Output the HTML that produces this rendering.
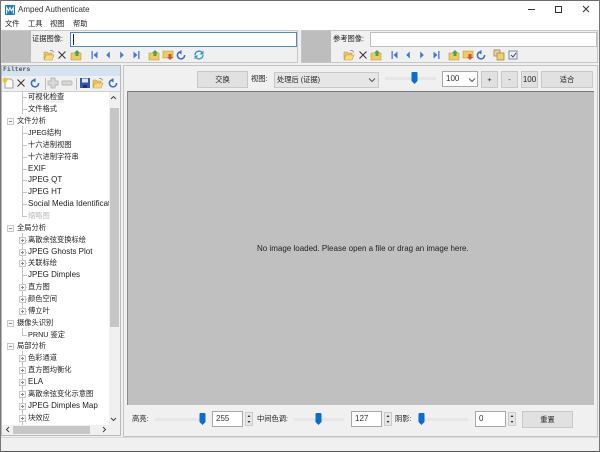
<!DOCTYPE html>
<html><head><meta charset="utf-8">
<style>
html,body{margin:0;padding:0;background:#f0f0f0}
body{width:600px;height:452px;overflow:hidden;position:relative}
#w{position:absolute;left:0;top:0;width:600px;height:452px;overflow:hidden;background:#f0f0f0;font-family:"Liberation Sans","Noto Sans CJK SC",sans-serif;color:#222;font-size:7.25px;filter:blur(.3px)}
.a{position:absolute}
.t{position:absolute;white-space:nowrap;line-height:12px;height:12px}
.btn{position:absolute;background:#e1e1e1;border:1px solid #c8c8c8;box-sizing:border-box;text-align:center;color:#222}
.inp{position:absolute;background:#fff;border:1px solid #a8a8a8;box-sizing:border-box;color:#333;padding-left:3px}
.track{position:absolute;height:3px;background:#e6e6e6}
.thumb{position:absolute;width:7px;height:12px}
.ico{position:absolute;width:12px;height:12px}
.l{font-size:8px}
.v{position:absolute;width:1px;background:#c4c4c4}
.h{position:absolute;height:1px;background:#c4c4c4}
.pm{position:absolute;width:7px;height:7px;border:1px solid #c8c8c8;box-sizing:border-box;background:#f8f8f8}
.pm:before{content:"";position:absolute;left:1px;top:2px;width:3px;height:1px;background:#888}
.pm.p:after{content:"";position:absolute;left:2px;top:1px;width:1px;height:3px;background:#888}
</style></head><body>
<svg width="0" height="0" style="position:absolute">
<defs>
<symbol id="fo" viewBox="0 0 12 12"><path d="M1 3h3l1 1h4v2H3L1 10z" fill="#e8c860" stroke="#b89a48" stroke-width=".6"/><path d="M3 6h8l-2 5H1z" fill="#f6da80" stroke="#c0a04c" stroke-width=".6"/><path d="M7 1.5q3-.5 3.5 2" stroke="#667" fill="none" stroke-width=".6"/></symbol>
<symbol id="x" viewBox="0 0 12 12"><path d="M2.5 2.5l7 7M9.5 2.5l-7 7" stroke="#333" stroke-width="1" fill="none"/></symbol>
<symbol id="up" viewBox="0 0 12 12"><path d="M1 4h10v7H1z" fill="#eccb64" stroke="#b8983f" stroke-width=".6"/><path d="M7 1l3 3H8.5v3h-3V4H4z" fill="#4aa544"/></symbol>
<symbol id="ex" viewBox="0 0 12 12"><path d="M1 2h10v7H1z" fill="#eccb64" stroke="#b8983f" stroke-width=".6"/><path d="M8 11l-3-3h1.5V5h3v3H11z" fill="#d4502f"/></symbol>
<symbol id="f" viewBox="0 0 12 12"><path d="M3.5 2h1.3v8H3.5z M9.5 2.5v7L5.5 6z" fill="#4078cf"/></symbol>
<symbol id="p" viewBox="0 0 12 12"><path d="M7.8 2.5v7L4.2 6z" fill="#4078cf"/></symbol>
<symbol id="n" viewBox="0 0 12 12"><path d="M4.2 2.5v7L7.8 6z" fill="#4078cf"/></symbol>
<symbol id="la" viewBox="0 0 12 12"><path d="M8.5 2h-1.3v8h1.3z M2.5 2.5v7L6.5 6z" fill="#4078cf"/></symbol>
<symbol id="r" viewBox="0 0 12 12"><path d="M4 3.2A3.6 3.6 0 1 0 9.6 6" stroke="#3a70c0" stroke-width="1.5" fill="none"/><path d="M6.5 1v4.5L3 3.2z" fill="#3a70c0"/></symbol>
<symbol id="s" viewBox="0 0 12 12"><path d="M2 6a4 4 0 0 1 7-2.5" stroke="#3a8fd0" stroke-width="1.4" fill="none"/><path d="M10.5 1.5v4h-4z" fill="#3a8fd0"/><path d="M10 6a4 4 0 0 1-7 2.5" stroke="#38a0c8" stroke-width="1.4" fill="none"/><path d="M1.5 10.5v-4h4z" fill="#38a0c8"/></symbol>
<symbol id="c" viewBox="0 0 12 12"><path d="M1 1h6v6H1z" fill="#e9d79a" stroke="#8c7c48" stroke-width=".7"/><path d="M4 4h7v7H4z" fill="#efcf70" stroke="#9c8440" stroke-width=".7"/></symbol>
<symbol id="k" viewBox="0 0 12 12"><path d="M2 2h8v8H2z" fill="#eef2f8" stroke="#7c8aa0"/><path d="M4 6l2 2 3-4" stroke="#445" fill="none"/></symbol>
<symbol id="ne" viewBox="0 0 12 12"><path d="M3 2h6l2 2v7H3z" fill="#fff" stroke="#8a8a8a" stroke-width=".8"/><circle cx="3" cy="3" r="2.4" fill="#f2c521"/></symbol>
<symbol id="pl" viewBox="0 0 12 12"><path d="M4 1h4v3h3v4H8v3H4V8H1V4h3z" fill="#d8d8d8" stroke="#b8b8b8"/></symbol>
<symbol id="mi" viewBox="0 0 12 12"><rect x="1" y="4" width="10" height="4" rx="1" fill="#d8d8d8" stroke="#b8b8b8"/></symbol>
<symbol id="sv" viewBox="0 0 12 12"><path d="M1 1h10v10H1z" fill="#2f55b0"/><path d="M3 1.5h6v4H3z" fill="#dfe6f5"/><path d="M4 8h4v3H4z" fill="#1c2f70"/></symbol>
<symbol id="th" viewBox="0 0 7 12"><path d="M.5 1q0-1 1-1h4q1 0 1 1v8l-3 3-3-3z" fill="#0a6cd0"/></symbol>
<symbol id="lg" viewBox="0 0 12 12"><rect width="12" height="12" rx="1" fill="#1c7cc4"/><path d="M2 10.5V3l2.3 4L6 3l1.7 4L10 3v7.5" stroke="#fff" stroke-width="1.2" fill="none"/></symbol>
</defs></svg>
<div id="w">

<!-- window frame -->
<div class="a" style="left:0;top:0;width:600px;height:1px;background:#6f6a68"></div>
<div class="a" style="left:0;top:1px;width:600px;height:29px;background:#fff"></div>
<div class="a" style="left:0;top:451px;width:600px;height:1px;background:#555"></div>
<div class="a" style="left:0;top:0;width:1px;height:452px;background:#777"></div>
<div class="a" style="left:599px;top:0;width:1px;height:452px;background:#777"></div>

<!-- title -->
<svg class="ico" style="left:5px;top:5px;width:10px;height:10px"><use href="#lg"/></svg>
<div class="t l" style="left:18px;top:4px;color:#333">Amped Authenticate</div>
<div class="a" style="left:528px;top:9px;width:7px;height:1px;background:#333"></div>
<div class="a" style="left:555px;top:6px;width:7px;height:7px;border:1px solid #333;box-sizing:border-box"></div>
<svg class="a" style="left:582px;top:5px;width:8px;height:8px"><path d="M1 1l6 6M7 1L1 7" stroke="#333" fill="none"/></svg>

<!-- menu -->
<div class="t" style="left:5px;top:18px">文件</div>
<div class="t" style="left:28px;top:18px">工具</div>
<div class="t" style="left:50px;top:18px">视图</div>
<div class="t" style="left:73px;top:18px">帮助</div>

<!-- toolbars -->
<div class="a" style="left:1px;top:30px;width:297px;height:33px;background:#f0f0f0;border:1px solid #c6c6c6;box-sizing:border-box"></div>
<div class="a" style="left:2px;top:31px;width:29px;height:31px;background:#bdbdbd"></div>
<div class="t" style="left:32px;top:33px">证据图像:</div>
<div class="a" style="left:70px;top:32px;width:227px;height:15px;background:#fff;border:1px solid #4d8cc8;box-sizing:border-box"></div>
<div class="a" style="left:73px;top:34px;width:1px;height:11px;background:#222"></div>
<svg class="ico" style="left:43px;top:49px"><use href="#fo"/></svg>
<svg class="ico" style="left:56px;top:49px"><use href="#x"/></svg>
<svg class="ico" style="left:70px;top:49px"><use href="#up"/></svg>
<svg class="ico" style="left:88px;top:49px"><use href="#f"/></svg>
<svg class="ico" style="left:102px;top:49px"><use href="#p"/></svg>
<svg class="ico" style="left:116px;top:49px"><use href="#n"/></svg>
<svg class="ico" style="left:131px;top:49px"><use href="#la"/></svg>
<svg class="ico" style="left:148px;top:49px"><use href="#up"/></svg>
<svg class="ico" style="left:162px;top:49px"><use href="#ex"/></svg>
<svg class="ico" style="left:175px;top:49px"><use href="#r"/></svg>
<svg class="ico" style="left:193px;top:49px"><use href="#s"/></svg>

<div class="a" style="left:301px;top:30px;width:297px;height:33px;background:#f0f0f0;border:1px solid #c6c6c6;box-sizing:border-box"></div>
<div class="a" style="left:302px;top:31px;width:29px;height:31px;background:#bdbdbd"></div>
<div class="t" style="left:333px;top:33px">参考图像:</div>
<div class="a" style="left:370px;top:32px;width:227px;height:15px;background:#fff;border:1px solid #c0c0c0;box-sizing:border-box"></div>
<svg class="ico" style="left:343px;top:49px"><use href="#fo"/></svg>
<svg class="ico" style="left:357px;top:49px"><use href="#x"/></svg>
<svg class="ico" style="left:370px;top:49px"><use href="#up"/></svg>
<svg class="ico" style="left:388px;top:49px"><use href="#f"/></svg>
<svg class="ico" style="left:402px;top:49px"><use href="#p"/></svg>
<svg class="ico" style="left:416px;top:49px"><use href="#n"/></svg>
<svg class="ico" style="left:431px;top:49px"><use href="#la"/></svg>
<svg class="ico" style="left:448px;top:49px"><use href="#up"/></svg>
<svg class="ico" style="left:462px;top:49px"><use href="#ex"/></svg>
<svg class="ico" style="left:475px;top:49px"><use href="#r"/></svg>
<svg class="ico" style="left:493px;top:49px"><use href="#c"/></svg>
<svg class="ico" style="left:507px;top:49px"><use href="#k"/></svg>

<!-- filters panel -->
<div class="a" style="left:1px;top:65px;width:120px;height:371px;border:1px solid #b9b9b9;box-sizing:border-box;background:#fff"></div>
<div class="a" style="left:2px;top:66px;width:118px;height:10px;background:#d5e3f1"></div>
<div class="t" style="left:3px;top:64px;font-family:'Liberation Mono',monospace;font-size:6.5px;font-weight:bold;color:#555">Filters</div>
<div class="a" style="left:2px;top:76px;width:118px;height:16px;background:#f0f0f0;border-bottom:1px solid #d0d0d0;box-sizing:border-box"></div>
<svg class="ico" style="left:2px;top:77px"><use href="#ne"/></svg>
<svg class="ico" style="left:15px;top:77px"><use href="#x"/></svg>
<svg class="ico" style="left:29px;top:77px"><use href="#r"/></svg>
<div class="a" style="left:45px;top:78px;width:1px;height:12px;background:#bbb"></div>
<svg class="ico" style="left:47px;top:77px"><use href="#pl"/></svg>
<svg class="ico" style="left:61px;top:77px"><use href="#mi"/></svg>
<div class="a" style="left:76px;top:78px;width:1px;height:12px;background:#bbb"></div>
<svg class="ico" style="left:79px;top:77px"><use href="#sv"/></svg>
<svg class="ico" style="left:92px;top:77px"><use href="#fo"/></svg>
<svg class="ico" style="left:107px;top:77px"><use href="#r"/></svg>

<!-- tree lines -->
<div class="v" style="left:22px;top:92px;height:22px"></div>
<div class="h" style="left:22px;top:97px;width:5px"></div>
<div class="h" style="left:22px;top:109px;width:5px"></div>
<div class="v" style="left:22px;top:126px;height:90px"></div>
<div class="h" style="left:22px;top:133px;width:5px"></div>
<div class="h" style="left:22px;top:145px;width:5px"></div>
<div class="h" style="left:22px;top:157px;width:5px"></div>
<div class="h" style="left:22px;top:169px;width:5px"></div>
<div class="h" style="left:22px;top:180px;width:5px"></div>
<div class="h" style="left:22px;top:192px;width:5px"></div>
<div class="h" style="left:22px;top:204px;width:5px"></div>
<div class="h" style="left:22px;top:216px;width:5px"></div>
<div class="v" style="left:22px;top:233px;height:78px"></div>
<div class="h" style="left:22px;top:240px;width:5px"></div>
<div class="h" style="left:22px;top:252px;width:5px"></div>
<div class="h" style="left:22px;top:263px;width:5px"></div>
<div class="h" style="left:22px;top:275px;width:5px"></div>
<div class="h" style="left:22px;top:287px;width:5px"></div>
<div class="h" style="left:22px;top:299px;width:5px"></div>
<div class="h" style="left:22px;top:311px;width:5px"></div>
<div class="v" style="left:22px;top:328px;height:7px"></div>
<div class="h" style="left:22px;top:335px;width:5px"></div>
<div class="v" style="left:22px;top:351px;height:74px"></div>
<div class="pm" style="left:7px;top:118px"></div>
<div class="pm" style="left:7px;top:225px"></div>
<div class="pm" style="left:7px;top:320px"></div>
<div class="pm" style="left:7px;top:343px"></div>
<div class="pm p" style="left:19px;top:237px"></div>
<div class="pm p" style="left:19px;top:249px"></div>
<div class="pm p" style="left:19px;top:260px"></div>
<div class="pm p" style="left:19px;top:284px"></div>
<div class="pm p" style="left:19px;top:296px"></div>
<div class="pm p" style="left:19px;top:308px"></div>
<div class="pm p" style="left:19px;top:355px"></div>
<div class="pm p" style="left:19px;top:367px"></div>
<div class="pm p" style="left:19px;top:379px"></div>
<div class="pm p" style="left:19px;top:391px"></div>
<div class="pm p" style="left:19px;top:403px"></div>
<div class="pm p" style="left:19px;top:415px"></div>

<!-- tree text -->
<div class="a" style="left:28px;top:92px;width:36px;height:11px;background:#f2f2f2"></div>
<div class="t" style="left:28px;top:91px">可视化检查</div>
<div class="t" style="left:28px;top:103px">文件格式</div>
<div class="t" style="left:17px;top:115px">文件分析</div>
<div class="t" style="left:28px;top:127px">JPEG结构</div>
<div class="t" style="left:28px;top:139px">十六进制视图</div>
<div class="t" style="left:28px;top:151px">十六进制字符串</div>
<div class="t l" style="left:28px;top:163px">EXIF</div>
<div class="t l" style="left:28px;top:174px">JPEG QT</div>
<div class="t l" style="left:28px;top:186px">JPEG HT</div>
<div class="t l" style="left:28px;top:198px;width:81px;overflow:hidden">Social Media Identificat</div>
<div class="t" style="left:28px;top:210px;color:#bbb">缩略图</div>
<div class="t" style="left:17px;top:222px">全局分析</div>
<div class="t" style="left:28px;top:234px">离散余弦变换标绘</div>
<div class="t l" style="left:28px;top:246px">JPEG Ghosts Plot</div>
<div class="t" style="left:28px;top:257px">关联标绘</div>
<div class="t l" style="left:28px;top:269px">JPEG Dimples</div>
<div class="t" style="left:28px;top:281px">直方图</div>
<div class="t" style="left:28px;top:293px">颜色空间</div>
<div class="t" style="left:28px;top:305px">傅立叶</div>
<div class="t" style="left:17px;top:317px">摄像头识别</div>
<div class="t" style="left:28px;top:329px">PRNU 鉴定</div>
<div class="t" style="left:17px;top:340px">局部分析</div>
<div class="t" style="left:28px;top:352px">色彩通道</div>
<div class="t" style="left:28px;top:364px">直方图均衡化</div>
<div class="t l" style="left:28px;top:376px">ELA</div>
<div class="t" style="left:28px;top:388px">离散余弦变化示意图</div>
<div class="t l" style="left:28px;top:400px">JPEG Dimples Map</div>
<div class="t" style="left:28px;top:412px">块效应</div>

<!-- tree scrollbars -->
<div class="a" style="left:109px;top:92px;width:11px;height:333px;background:#f0f0f0"></div>
<div class="a" style="left:110px;top:108px;width:9px;height:219px;background:#c6c6c6"></div>
<svg class="a" style="left:109px;top:94px;width:9px;height:8px"><path d="M2 5l2.5-2.5L7 5" stroke="#444" fill="none"/></svg>
<svg class="a" style="left:109px;top:415px;width:9px;height:8px"><path d="M2 3l2.5 2.5L7 3" stroke="#444" fill="none"/></svg>
<div class="a" style="left:2px;top:425px;width:118px;height:10px;background:#f0f0f0"></div>
<div class="a" style="left:13px;top:426px;width:77px;height:8px;background:#c6c6c6"></div>
<svg class="a" style="left:4px;top:425px;width:8px;height:9px"><path d="M5 2L2.5 4.5 5 7" stroke="#444" fill="none"/></svg>
<svg class="a" style="left:100px;top:425px;width:8px;height:9px"><path d="M3 2l2.5 2.5L3 7" stroke="#444" fill="none"/></svg>

<!-- main panel -->
<div class="a" style="left:123px;top:65px;width:475px;height:372px;border:1px solid #c4c4c4;box-sizing:border-box;background:#f0f0f0"></div>
<div class="btn" style="left:197px;top:71px;width:51px;height:17px;line-height:15px">交换</div>
<div class="t" style="left:251px;top:73px">视图:</div>
<div class="btn" style="left:274px;top:72px;width:105px;height:16px;line-height:14px;text-align:left;padding-left:2px;background:#e6e6e6">处理后 (证据)</div>
<svg class="a" style="left:368px;top:76px;width:8px;height:8px"><path d="M1 2.5l3 3 3-3" stroke="#555" fill="none"/></svg>
<div class="track" style="left:385px;top:77px;width:51px"></div>
<svg class="thumb" style="left:411px;top:72px"><use href="#th"/></svg>
<div class="inp l" style="left:442px;top:71px;width:36px;height:16px;line-height:13px">100</div>
<svg class="a" style="left:468px;top:76px;width:8px;height:8px"><path d="M1 2.5l3 3 3-3" stroke="#555" fill="none"/></svg>
<div class="btn" style="left:481px;top:71px;width:17px;height:17px;line-height:15px">+</div>
<div class="btn" style="left:501px;top:71px;width:17px;height:17px;line-height:15px">-</div>
<div class="btn l" style="left:521px;top:71px;width:17px;height:17px;line-height:15px">100</div>
<div class="btn" style="left:541px;top:71px;width:52px;height:17px;line-height:15px">适合</div>

<div class="a" style="left:127px;top:91px;width:467px;height:314px;background:#c0c0c0;border-top:1px solid #777;border-left:1px solid #8a8a8a;box-sizing:border-box"></div>
<div class="t" style="left:257px;top:243px;font-size:8px;color:#222">No image loaded. Please open a file or drag an image here.</div>

<!-- bottom controls -->
<div class="t" style="left:132px;top:413px">高亮:</div>
<div class="track" style="left:155px;top:418px;width:50px"></div>
<svg class="thumb" style="left:199px;top:413px"><use href="#th"/></svg>
<div class="inp l" style="left:212px;top:411px;width:31px;height:16px;line-height:13px">255</div>
<div class="a" style="left:245px;top:412px;width:8px;height:14px;background:#e6e6e6;border:1px solid #ccc;box-sizing:border-box"></div>
<svg class="a" style="left:245px;top:412px;width:8px;height:14px"><path d="M4 3L2.5 5h3zM4 11L2.5 9h3z" fill="#333"/></svg>
<div class="t" style="left:257px;top:413px">中间色调:</div>
<div class="track" style="left:294px;top:418px;width:50px"></div>
<svg class="thumb" style="left:315px;top:413px"><use href="#th"/></svg>
<div class="inp l" style="left:351px;top:411px;width:31px;height:16px;line-height:13px">127</div>
<div class="a" style="left:384px;top:412px;width:8px;height:14px;background:#e6e6e6;border:1px solid #ccc;box-sizing:border-box"></div>
<svg class="a" style="left:384px;top:412px;width:8px;height:14px"><path d="M4 3L2.5 5h3zM4 11L2.5 9h3z" fill="#333"/></svg>
<div class="t" style="left:395px;top:413px">阴影:</div>
<div class="track" style="left:418px;top:418px;width:50px"></div>
<svg class="thumb" style="left:418px;top:413px"><use href="#th"/></svg>
<div class="inp l" style="left:475px;top:411px;width:31px;height:16px;line-height:13px">0</div>
<div class="a" style="left:508px;top:412px;width:8px;height:14px;background:#e6e6e6;border:1px solid #ccc;box-sizing:border-box"></div>
<svg class="a" style="left:508px;top:412px;width:8px;height:14px"><path d="M4 3L2.5 5h3zM4 11L2.5 9h3z" fill="#333"/></svg>
<div class="btn" style="left:522px;top:411px;width:51px;height:17px;line-height:15px">重置</div>

<!-- status -->
<div class="a" style="left:1px;top:437px;width:598px;height:14px;background:#f0f0f0;border-top:1px solid #d8d8d8;box-sizing:border-box"></div>
</div>
</body></html>
